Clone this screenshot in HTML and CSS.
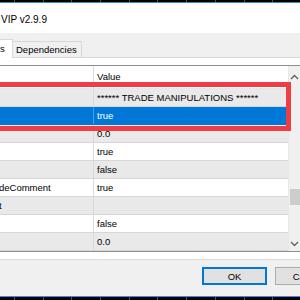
FILE: index.html
```html
<!DOCTYPE html>
<html lang="en">
<head>
    <meta charset="UTF-8">
    <title>Expert properties</title>
    <link rel="stylesheet" href="styles.css">
</head>
<body>
    <div class="frame-top"></div>
    <div class="titlebar">VIP v2.9.9</div>
    <div class="tabstrip">
        <div class="tab tab-active">s</div>
        <div class="tab">Dependencies</div>
    </div>
    <div class="page">
        <div class="grid-wrap">
            <div class="grid">
                <div class="row row-head"><div class="cell name"></div><div class="cell value">Value</div></div>
                <div class="row odd"><div class="cell name"></div><div class="cell value">****** TRADE MANIPULATIONS ******</div></div>
                <div class="row selected"><div class="cell name"></div><div class="cell value">true</div></div>
                <div class="row odd"><div class="cell name"></div><div class="cell value">0.0</div></div>
                <div class="row"><div class="cell name"></div><div class="cell value">true</div></div>
                <div class="row odd"><div class="cell name"></div><div class="cell value">false</div></div>
                <div class="row"><div class="cell name">deComment</div><div class="cell value">true</div></div>
                <div class="row odd"><div class="cell name">t</div><div class="cell value"></div></div>
                <div class="row"><div class="cell name"></div><div class="cell value">false</div></div>
                <div class="row odd"><div class="cell name"></div><div class="cell value">0.0</div></div>
            </div>
            <div class="scrollbar">
                <div class="arrow arrow-up">
                    <svg width="9" height="6" viewBox="0 0 9 6"><polyline points="1,5 4.5,1.5 8,5" fill="none" stroke="#606060" stroke-width="1.3"/></svg>
                </div>
                <div class="track"><div class="thumb"></div></div>
                <div class="arrow arrow-down">
                    <svg width="9" height="6" viewBox="0 0 9 6"><polyline points="1,1 4.5,4.5 8,1" fill="none" stroke="#606060" stroke-width="1.3"/></svg>
                </div>
            </div>
        </div>
        <div class="highlight"></div>
    </div>
    <div class="buttons">
        <button class="btn btn-default">OK</button>
        <button class="btn">Cancel</button>
    </div>
    <div class="frame-bottom"></div>
</body>
</html>
```

FILE: styles.css
```css
body {
    margin: 0;
    width: 300px;
    height: 300px;
    overflow: hidden;
    font-family: "Liberation Sans", Arial, sans-serif;
    font-size: 9.5px;
    color: #000;
    background: #fff;
}
.frame-top {
    height: 2px;
    background: repeating-linear-gradient(90deg, #000 0 14px, #555 14px 15px, #000 15px 28.7px);
    border-bottom: 1px solid #3c8ad8;
}
.titlebar {
    height: 30px;
    padding: 10px 0 0 1px;
    box-sizing: border-box;
    line-height: 14px;
    font-size: 10px;
    background: #fff;
}
.tabstrip {
    height: 24px;
    display: flex;
    align-items: flex-end;
    background: #f0f0f0;
    border-bottom: 1px solid #d9d9d9;
}
.tab {
    height: 16px;
    padding: 0 4px 0 3px;
    line-height: 16px;
    background: #f0f0f0;
    border: 1px solid #d9d9d9;
    border-bottom: none;
    border-left: none;
    box-sizing: border-box;
}
.tab-active {
    height: 19px;
    width: 13px;
    padding: 0;
    margin-bottom: -1px;
    background: #fff;
    line-height: 18px;
    position: relative;
}
.page {
    position: relative;
    height: 202px;
    padding-top: 7px;
    box-sizing: border-box;
    background: #fff;
    border-bottom: 1px solid #dcdcdc;
}
.grid-wrap {
    display: flex;
    border-top: 1px solid #8a8f96;
    border-bottom: 1px solid #8a8f96;
}
.grid {
    width: 288px;
    flex: none;
}
.row {
    display: flex;
    height: 18px;
    line-height: 17px;
    border-bottom: 1px solid #d6d6d6;
    box-sizing: border-box;
    background: #fff;
}
.row-head {
    height: 23px;
    line-height: 22px;
    border-bottom-color: #e5e5e5;
}
.odd {
    background: #e9e9e9;
}
.selected {
    background: #0078d7;
    color: #fff;
    border-bottom-color: #0078d7;
}
.cell {
    white-space: nowrap;
    overflow: hidden;
}
.name {
    width: 93px;
    border-right: 1px solid #dadada;
    text-indent: -1px;
}
.value {
    flex: 1;
    padding-left: 3px;
}
.selected .name {
    border-right-color: #4a9be0;
}
.scrollbar {
    width: 13px;
    flex: none;
    display: flex;
    flex-direction: column;
    background: #f0f0f0;
    border-left: 1px solid #e8e8e8;
}
.arrow {
    display: flex;
    align-items: center;
    justify-content: center;
    padding-right: 2px;
}
.arrow-up {
    height: 22px;
}
.arrow-down {
    height: 14px;
}
.track {
    flex: 1;
}
.thumb {
    margin: 101px 0 0 1px;
    width: 12px;
    height: 16px;
    background: #cdcdcd;
}
.highlight {
    position: absolute;
    left: -10px;
    top: 24px;
    width: 301px;
    height: 49px;
    box-sizing: border-box;
    border: 5px solid #ef3d46;
}
.buttons {
    height: 36px;
    padding: 7px 0 0 202px;
    box-sizing: border-box;
    display: flex;
    gap: 8px;
    background: #f0f0f0;
}
.btn {
    flex: none;
    width: 65px;
    height: 18px;
    padding: 0;
    font-family: "Liberation Sans", Arial, sans-serif;
    font-size: 9.5px;
    color: #000;
    background: #e1e1e1;
    border: 1px solid #adadad;
    box-sizing: border-box;
}
.btn-default {
    border: 2px solid #0078d7;
}
.frame-bottom {
    height: 3px;
    border-top: 1px solid #3c8ad8;
    background: repeating-linear-gradient(90deg, #000 0 14px, #555 14px 15px, #000 15px 28.7px);
}
```
